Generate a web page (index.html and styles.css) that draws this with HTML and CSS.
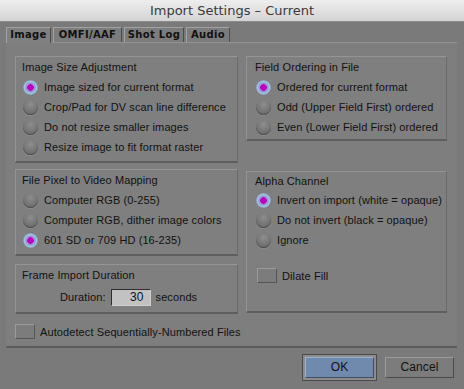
FILE: index.html
```html
<!DOCTYPE html>
<html lang="en">
<head>
  <meta charset="UTF-8" />
  <title>Import Settings - Current</title>
  <link rel="stylesheet" href="styles.css">
</head>
<body>
  <div class="titlebar">Import Settings – Current</div>
  <div class="tabs">
    <div class="tab active" style="width:45px">Image</div>
    <div class="tab" style="width:69px">OMFI/AAF</div>
    <div class="tab" style="width:60px">Shot Log</div>
    <div class="tab" style="width:44px">Audio</div>
  </div>
  <div class="panel">
    <div class="col">
      <div class="group g-size">
        <div class="legend">Image Size Adjustment</div>
        <div class="opt"><span class="radio on"></span>Image sized for current format</div>
        <div class="opt"><span class="radio"></span>Crop/Pad for DV scan line difference</div>
        <div class="opt"><span class="radio"></span>Do not resize smaller images</div>
        <div class="opt"><span class="radio"></span>Resize image to fit format raster</div>
      </div>
      <div class="group g-pixel">
        <div class="legend">File Pixel to Video Mapping</div>
        <div class="opt"><span class="radio"></span>Computer RGB (0-255)</div>
        <div class="opt"><span class="radio"></span>Computer RGB, dither image colors</div>
        <div class="opt"><span class="radio on"></span>601 SD or 709 HD (16-235)</div>
      </div>
      <div class="group g-frame">
        <div class="legend">Frame Import Duration</div>
        <div class="duration">
          <span>Duration:</span>
          <span class="field">30</span>
          <span>seconds</span>
        </div>
      </div>
      <div class="check autodetect"><span class="box"></span>Autodetect Sequentially-Numbered Files</div>
    </div>
    <div class="col">
      <div class="group g-field">
        <div class="legend">Field Ordering in File</div>
        <div class="opt"><span class="radio on"></span>Ordered for current format</div>
        <div class="opt"><span class="radio"></span>Odd (Upper Field First) ordered</div>
        <div class="opt"><span class="radio"></span>Even (Lower Field First) ordered</div>
      </div>
      <div class="group g-alpha">
        <div class="legend">Alpha Channel</div>
        <div class="opt"><span class="radio on"></span>Invert on import (white = opaque)</div>
        <div class="opt"><span class="radio"></span>Do not invert (black = opaque)</div>
        <div class="opt"><span class="radio"></span>Ignore</div>
        <div class="check dilate"><span class="box"></span>Dilate Fill</div>
      </div>
    </div>
  </div>
  <div class="buttons">
    <div class="btn-ring"><div class="btn ok">OK</div></div>
    <div class="btn cancel">Cancel</div>
  </div>
</body>
</html>
```
FILE: styles.css
```css
body {
  margin: 0;
  width: 464px;
  height: 389px;
  overflow: hidden;
  background: #7a7a7a;
  color: #111;
  font-family: "Liberation Sans", Arial, sans-serif;
  font-size: 11px;
  letter-spacing: 0.1px;
}
.titlebar {
  height: 21px;
  line-height: 22px;
  text-align: center;
  font-family: "DejaVu Sans", sans-serif;
  font-size: 13px;
  letter-spacing: 0;
  color: #3a3a3a;
  background: linear-gradient(#eeeeee, #d4d4d4);
  border-bottom: 1px solid #8a8a8a;
}
.tabs {
  display: flex;
  gap: 2px;
  padding: 5px 0 0 6px;
}
.tab {
  box-sizing: border-box;
  height: 15px;
  line-height: 14px;
  text-align: center;
  font-family: "DejaVu Sans", sans-serif;
  font-weight: bold;
  font-size: 10px;
  letter-spacing: 0.3px;
  background: #7c7c7c;
  border-top: 1px solid #a2a2a2;
  border-left: 1px solid #a2a2a2;
  border-right: 1px solid #4c4c4c;
}
.tab.active {
  background: #808080;
  height: 16px;
  margin-bottom: -1px;
}
.panel {
  display: grid;
  grid-template-columns: 223px 201px;
  gap: 8px;
  width: 451px;
  box-sizing: border-box;
  margin-left: 6px;
  padding: 13px 0 7px 9px;
  background: #7e7e7e;
  border-top: 1px solid #929292;
  border-bottom: 2px solid #5c5c5c;
  align-items: start;
}
.col {
  display: flex;
  flex-direction: column;
}
.group {
  background: #7f7f7f;
  border-top: 1px solid #959595;
  border-left: 1px solid #939393;
  border-right: 1px solid #6a6a6a;
  border-bottom: 2px solid #5e5e5e;
  padding: 0 6px 4px 6px;
}
.legend {
  line-height: 20px;
}
.opt {
  display: flex;
  align-items: center;
  gap: 6px;
  height: 20px;
  padding-left: 1px;
  white-space: nowrap;
}
.radio {
  width: 15px;
  height: 15px;
  border-radius: 50%;
  flex: none;
  box-sizing: border-box;
  background: radial-gradient(circle at 50% 30%, #8e8e8e, #6e6e6e 70%, #5a5a5a);
  box-shadow: inset 0 -1px 0 #4e4e4e, 0 1px 0 #8c8c8c;
}
.radio.on {
  background: radial-gradient(circle, #b300c0 0 3px, #e070ea 3.5px, #7fa0c4 4.5px, #a9c6e4 6px, #7d96b4 7.5px);
  box-shadow: none;
}
.g-pixel {
  margin-top: 6px;
}
.g-frame {
  margin-top: 8px;
  padding-bottom: 3px;
}
.duration {
  display: flex;
  align-items: center;
  height: 24px;
  padding-left: 38px;
  gap: 5px;
}
.field {
  box-sizing: border-box;
  width: 40px;
  height: 17px;
  line-height: 15px;
  text-align: right;
  padding-right: 6px;
  font-size: 12px;
  background: #c2c2c2;
  border-top: 1px solid #2e2e2e;
  border-left: 1px solid #2e2e2e;
  border-bottom: 1px solid #d0d0d0;
  border-right: 1px solid #d0d0d0;
  color: #111;
}
.check {
  display: flex;
  align-items: center;
  gap: 5px;
  height: 15px;
  white-space: nowrap;
}
.box {
  width: 18px;
  height: 13px;
  flex: none;
  background: #7c7c7c;
  border-top: 1px solid #9a9a9a;
  border-left: 1px solid #9a9a9a;
  border-bottom: 1px solid #555;
  border-right: 1px solid #555;
}
.autodetect {
  margin-top: 10px;
}
.g-field {
  padding-left: 8px;
  padding-bottom: 2px;
}
.g-alpha {
  margin-top: 30px;
  padding-left: 8px;
  padding-bottom: 28px;
}
.g-alpha .legend {
  line-height: 18px;
}
.dilate {
  margin-top: 18px;
  padding-left: 2px;
}
.buttons {
  display: flex;
  justify-content: flex-end;
  align-items: center;
  gap: 8px;
  padding: 6px 10px 0 0;
}
.btn {
  box-sizing: border-box;
  height: 21px;
  line-height: 19px;
  text-align: center;
  font-size: 12px;
}
.btn-ring {
  padding: 2px;
  border: 1px solid #4a4a4a;
  background: #8c8c8c;
}
.ok {
  width: 69px;
  background: #6f8aac;
  border-top: 1px solid #9ab0cc;
  border-left: 1px solid #9ab0cc;
  border-bottom: 1px solid #3e4e66;
  border-right: 1px solid #3e4e66;
}
.cancel {
  width: 69px;
  background: #7c7c7c;
  border-top: 1px solid #9c9c9c;
  border-left: 1px solid #9c9c9c;
  border-bottom: 1px solid #4c4c4c;
  border-right: 1px solid #4c4c4c;
}
```
